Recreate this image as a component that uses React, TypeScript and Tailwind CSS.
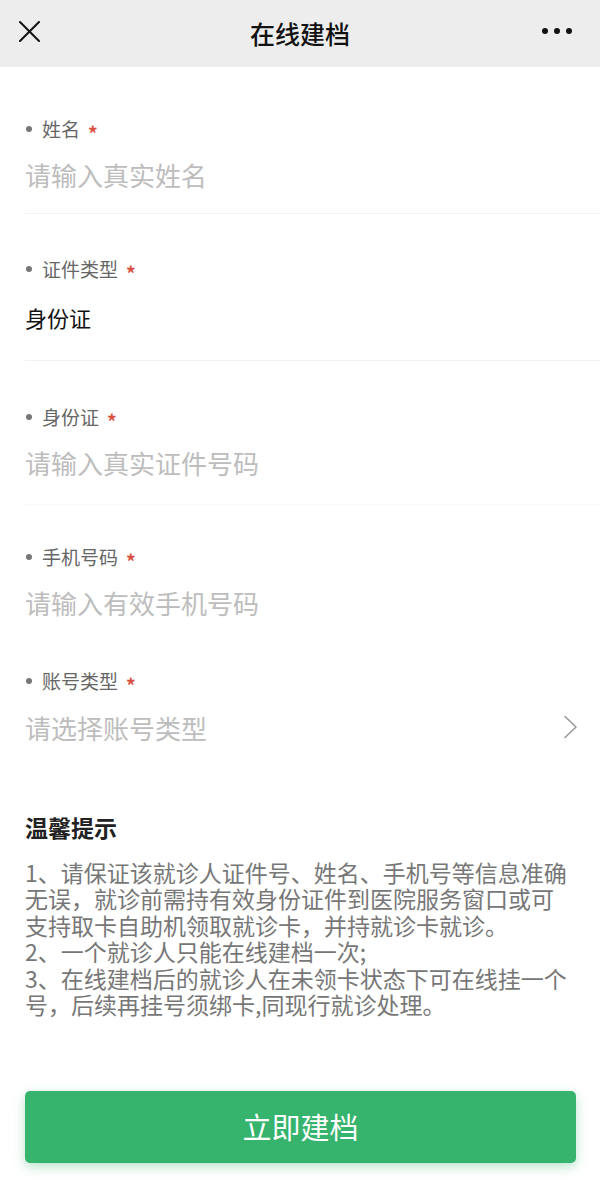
const font = { fontFamily: '"Noto Sans CJK SC", "Noto Sans", sans-serif' };

interface FieldProps {
  label: string;
  children: React.ReactNode;
  className: string;
  gapClass: string;
}

function Field({ label, children, className, gapClass }: FieldProps) {
  return (
    <div className={className}>
      <div className="flex h-6 items-center">
        <span className="ml-[1px] mr-[10px] h-[6px] w-[6px] rounded-full bg-[#777]" />
        <span className="text-[19px] leading-6 text-[#666]">{label}</span>
        <span className="ml-[8px] mt-[7px] text-[19px] font-bold leading-none text-[#d9503f]">*</span>
      </div>
      <div className={`flex h-[34px] items-center ${gapClass}`}>{children}</div>
    </div>
  );
}

export default function App() {
  return (
    <main style={font} className="flex h-[1180px] w-[600px] flex-col overflow-hidden bg-white">
      <header className="relative flex h-[67px] shrink-0 items-center justify-center bg-[#ededed]">
        <svg className="absolute left-[19px] top-[21px] h-[21px] w-[21px]" viewBox="0 0 21 21" fill="none">
          <path d="M1 1L20 20M20 1L1 20" stroke="#111" strokeWidth="2" strokeLinecap="round" />
        </svg>
        <h1 className="text-[25px] font-medium text-[#111]">在线建档</h1>
        <div className="absolute right-[28px] top-[28px] flex gap-[6px]">
          <span className="h-[6px] w-[6px] rounded-full bg-[#111]" />
          <span className="h-[6px] w-[6px] rounded-full bg-[#111]" />
          <span className="h-[6px] w-[6px] rounded-full bg-[#111]" />
        </div>
      </header>

      <section className="pl-[25px]">
        <Field label="姓名" className="h-[147px] border-b border-[#f2f2f2] pt-[50px]" gapClass="mt-[16px]">
          <span className="text-[26px] text-[#bdbdbd]">请输入真实姓名</span>
        </Field>
        <Field label="证件类型" className="h-[147px] border-b border-[#f2f2f2] pt-[43px]" gapClass="mt-[19px]">
          <span className="text-[22px] text-[#111]">身份证</span>
        </Field>
        <Field label="身份证" className="h-[144px] border-b border-[#fafafa] pt-[44px]" gapClass="mt-[16px]">
          <span className="text-[26px] text-[#bdbdbd]">请输入真实证件号码</span>
        </Field>
        <Field label="手机号码" className="h-[124px] pt-[40px]" gapClass="mt-[16px]">
          <span className="text-[26px] text-[#bdbdbd]">请输入有效手机号码</span>
        </Field>
        <Field label="账号类型" className="h-[120px] pr-[22px] pt-[40px]" gapClass="mt-[17px] justify-between">
          <span className="text-[26px] text-[#bdbdbd]">请选择账号类型</span>
          <svg className="h-[24px] w-[15px]" viewBox="0 0 15 24" fill="none">
            <path d="M2 1.5L13 12L2 22.5" stroke="#999" strokeWidth="1.6" strokeLinecap="round" strokeLinejoin="round" />
          </svg>
        </Field>
      </section>

      <section className="px-[25px] pt-[64px]">
        <h2 className="h-[28px] text-[23px] font-bold leading-[28px] text-[#222]">温馨提示</h2>
        <div className="mt-[18px] text-[23px] leading-[26.4px] text-[#777]">
          <p>1、请保证该就诊人证件号、姓名、手机号等信息准确无误，就诊前需持有效身份证件到医院服务窗口或可支持取卡自助机领取就诊卡，并持就诊卡就诊。</p>
          <p>2、一个就诊人只能在线建档一次;</p>
          <p>3、在线建档后的就诊人在未领卡状态下可在线挂一个号，后续再挂号须绑卡,同现行就诊处理。</p>
        </div>
      </section>

      <div className="mt-auto px-[25px] pb-[17px]">
        <button
          type="button"
          className="flex h-[72px] w-[551px] items-center justify-center rounded-[5px] bg-[#36b36d] text-[29px] text-white shadow-[0_4px_12px_rgba(54,179,109,0.35)]"
        >
          立即建档
        </button>
      </div>
    </main>
  );
}
